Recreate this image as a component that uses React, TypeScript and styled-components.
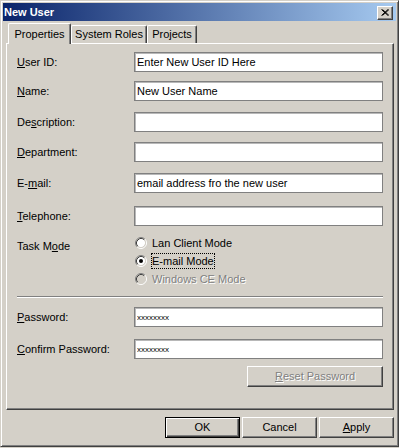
import React from "react";
import styled, { createGlobalStyle } from "styled-components";

const Global = createGlobalStyle`
  html, body { margin: 0; padding: 0; background: #d4d0c8; }
  body { font-family: "Liberation Sans", Arial, sans-serif; font-size: 11px; color: #000; }
  * { box-sizing: border-box; }
`;

const Window = styled.div`
  width: 399px;
  height: 447px;
  background: #d4d0c8;
  border: 1px solid;
  border-color: #d4d0c8 #404040 #404040 #d4d0c8;
  box-shadow: inset 1px 1px #fff, inset -1px -1px #808080;
  padding: 2px;
  display: flex;
  flex-direction: column;
`;

const TitleBar = styled.div`
  height: 18px;
  background: linear-gradient(to right, #0a246a, #a6caf0);
  display: flex;
  align-items: center;
  justify-content: space-between;
  padding: 0 3px 0 1px;
`;

const Title = styled.span`
  color: #fff;
  font-weight: bold;
  font-size: 11px;
  line-height: 13px;
`;

const CloseButton = styled.div`
  width: 16px;
  height: 14px;
  margin-top: 1px;
  background: #d4d0c8;
  border: 1px solid;
  border-color: #fff #404040 #404040 #fff;
  box-shadow: inset -1px -1px #808080;
  display: flex;
  align-items: center;
  justify-content: center;
`;

const Body = styled.div`
  display: flex;
  flex-direction: column;
  padding: 0 2px 0 3px;
`;

const TabStrip = styled.div`
  height: 22px;
  display: flex;
  align-items: flex-end;
  padding-left: 2px;
  position: relative;
  z-index: 1;
`;

const Tab = styled.div<{ $active?: boolean; $w: number }>`
  width: ${(p) => p.$w}px;
  height: ${(p) => (p.$active ? 21 : 18)}px;
  margin-bottom: ${(p) => (p.$active ? -1 : 0)}px;
  padding-top: ${(p) => (p.$active ? 4 : 2)}px;
  background: #d4d0c8;
  border-top: 1px solid #fff;
  border-left: 1px solid #fff;
  border-right: 1px solid #404040;
  box-shadow: inset -1px 0 #808080;
  border-radius: 2px 2px 0 0;
  text-align: center;
  line-height: 13px;
  white-space: nowrap;
`;

const Panel = styled.div`
  height: 367px;
  border: 1px solid;
  border-color: #fff #404040 #404040 #fff;
  box-shadow: inset -1px -1px #808080;
  padding: 8px 10px 0 10px;
  display: flex;
  flex-direction: column;
`;

const FieldRow = styled.div<{ $mt: number }>`
  display: grid;
  grid-template-columns: 117px 1fr;
  align-items: center;
  height: 20px;
  margin-top: ${(p) => p.$mt}px;
`;

const Label = styled.label`
  line-height: 13px;
  white-space: nowrap;
`;

const TextBox = styled.input<{ $secret?: boolean }>`
  height: 20px;
  width: 100%;
  margin: 0;
  background: #fff;
  border: 1px solid #808080;
  box-shadow: inset 1px 1px #b8b8b8;
  padding: 0 2px;
  font-family: "Liberation Sans", Arial, sans-serif;
  font-size: ${(p) => (p.$secret ? 8 : 11)}px;
  color: #000;
  outline: none;
`;

const TaskRow = styled.div`
  display: grid;
  grid-template-columns: 117px 1fr;
  align-items: start;
  margin-top: 8px;
`;

const TaskLabel = styled(Label)`
  padding-top: 6px;
`;

const RadioGroup = styled.div`
  display: flex;
  flex-direction: column;
  padding-left: 1px;
`;

const RadioRow = styled.div<{ $disabled?: boolean }>`
  height: 18px;
  display: flex;
  align-items: center;
  gap: 4px;
  color: ${(p) => (p.$disabled ? "#808080" : "#000")};
  text-shadow: ${(p) => (p.$disabled ? "1px 1px #fff" : "none")};
`;

const RadioText = styled.span<{ $focus?: boolean }>`
  line-height: 12px;
  padding: 1px 0 1px 0;
  border: 1px dotted ${(p) => (p.$focus ? "#000" : "transparent")};
  white-space: nowrap;
`;

const Separator = styled.div`
  height: 2px;
  margin-top: 8px;
  border-top: 1px solid #808080;
  border-bottom: 1px solid #fff;
`;

const ActionRow = styled.div<{ $mt: number }>`
  display: flex;
  justify-content: flex-end;
  gap: 2px;
  margin-top: ${(p) => p.$mt}px;
`;

const Button = styled.div<{ $w: number; $default?: boolean; $disabled?: boolean }>`
  width: ${(p) => p.$w}px;
  height: 21px;
  background: #d4d0c8;
  border: 1px solid;
  border-color: ${(p) => (p.$default ? "#000" : "#fff #404040 #404040 #fff")};
  box-shadow: ${(p) =>
    p.$default
      ? "inset 1px 1px #fff, inset -1px -1px #404040, inset -2px -2px #808080"
      : "inset -1px -1px #808080"};
  display: flex;
  align-items: center;
  justify-content: center;
  line-height: 13px;
  color: ${(p) => (p.$disabled ? "#808080" : "#000")};
  text-shadow: ${(p) => (p.$disabled ? "1px 1px #fff" : "none")};
`;

const Radio = ({ checked, disabled }: { checked?: boolean; disabled?: boolean }) => (
  <svg width="12" height="12" viewBox="0 0 12 12">
    <circle cx="6" cy="6" r="4.2" fill={disabled ? "#d4d0c8" : "#fff"} />
    <path d="M2.11 9.89 A5.5 5.5 0 0 1 9.89 2.11" stroke="#808080" fill="none" />
    <path d="M9.89 2.11 A5.5 5.5 0 0 1 2.11 9.89" stroke="#fff" fill="none" />
    <path d="M2.82 9.18 A4.5 4.5 0 0 1 9.18 2.82" stroke="#404040" fill="none" />
    <path d="M9.18 2.82 A4.5 4.5 0 0 1 2.82 9.18" stroke="#d4d0c8" fill="none" />
    {checked && <circle cx="6" cy="6" r="2" fill="#000" />}
  </svg>
);

const Field = ({ mt, label, value, secret }: { mt: number; label: React.ReactNode; value?: string; secret?: boolean }) => (
  <FieldRow $mt={mt}>
    <Label>{label}</Label>
    <TextBox readOnly value={value ?? ""} $secret={secret} />
  </FieldRow>
);

export default function App() {
  return (
    <>
      <Global />
      <Window>
        <TitleBar>
          <Title>New User</Title>
          <CloseButton>
            <svg width="8" height="7" viewBox="0 0 8 7">
              <path d="M0.5 0.5 L7 6.5 M1.5 0.5 L8 6.5 M7 0.5 L0.5 6.5 M8 0.5 L1.5 6.5" stroke="#000" strokeWidth="1" />
            </svg>
          </CloseButton>
        </TitleBar>
        <Body>
          <TabStrip>
            <Tab $active $w={63}>Properties</Tab>
            <Tab $w={76}>System Roles</Tab>
            <Tab $w={50}>Projects</Tab>
          </TabStrip>
          <Panel>
            <Field mt={0} label={<><u>U</u>ser ID:</>} value="Enter New User ID Here" />
            <Field mt={9} label={<><u>N</u>ame:</>} value="New User Name" />
            <Field mt={11} label={<>De<u>s</u>cription:</>} />
            <Field mt={10} label={<><u>D</u>epartment:</>} />
            <Field mt={11} label={<>E-<u>m</u>ail:</>} value="email address fro the new user" />
            <Field mt={13} label={<><u>T</u>elephone:</>} />
            <TaskRow>
              <TaskLabel>Task M<u>o</u>de</TaskLabel>
              <RadioGroup>
                <RadioRow>
                  <Radio />
                  <RadioText>Lan Client Mode</RadioText>
                </RadioRow>
                <RadioRow>
                  <Radio checked />
                  <RadioText $focus>E-mail Mode</RadioText>
                </RadioRow>
                <RadioRow $disabled>
                  <Radio disabled />
                  <RadioText>Windows CE Mode</RadioText>
                </RadioRow>
              </RadioGroup>
            </TaskRow>
            <Separator />
            <Field mt={9} label={<><u>P</u>assword:</>} value="xxxxxxxx" secret />
            <Field mt={12} label={<><u>C</u>onfirm Password:</>} value="xxxxxxxx" secret />
            <ActionRow $mt={7}>
              <Button $w={136} $disabled>
                <span><u>R</u>eset Password</span>
              </Button>
            </ActionRow>
          </Panel>
          <ActionRow $mt={7}>
            <Button $w={75} $default>OK</Button>
            <Button $w={75}>Cancel</Button>
            <Button $w={75}>
              <span><u>A</u>pply</span>
            </Button>
          </ActionRow>
        </Body>
      </Window>
    </>
  );
}
